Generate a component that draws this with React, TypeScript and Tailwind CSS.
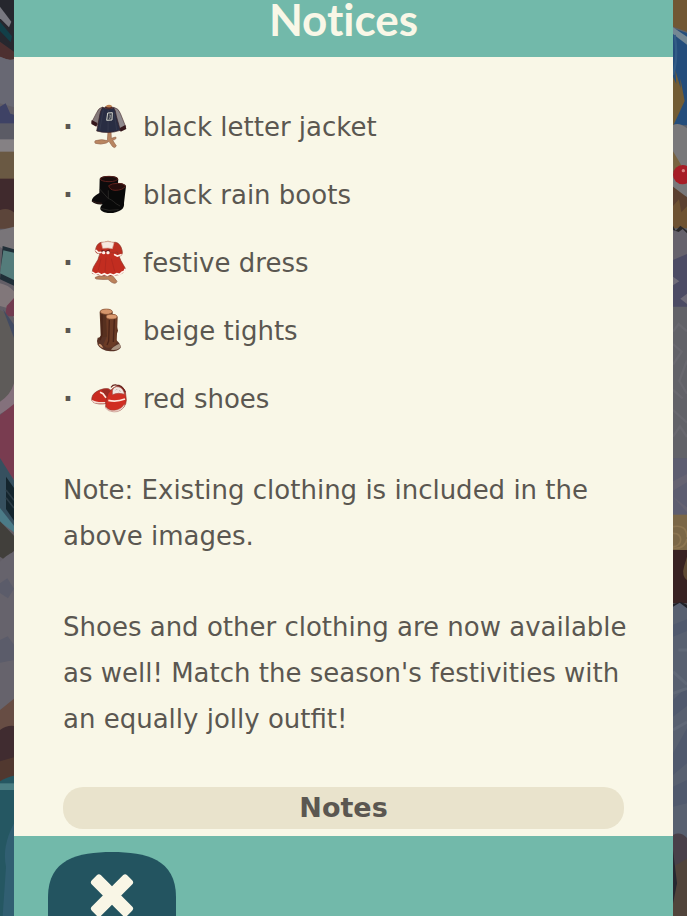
import { ReactNode } from 'react'

function JacketIcon() {
  return (
    <svg viewBox="120 24 111 144" className="h-12 w-[37px] shrink-0" aria-hidden="true">
      <path d="M136 137q20-6 36 0l2-26h9l1 19 13-4q5 6-9 10l11 17q-5 9-12 1l-10-15-8 5q-17 6-33 1-4-4 0-8Z" fill="#b98560" stroke="#94634a" strokeWidth="2" />
      <ellipse cx="177" cy="35" rx="9" ry="6" fill="#bd7c4c" />
      <path d="M158 36q-13 3-18 17l-15 29 15 10 20-22Z" fill="#84797a" stroke="#51383a" strokeWidth="2" />
      <path d="M191 37q15 3 20 18l16 40-17 12-24-43Z" fill="#8f898d" stroke="#51383a" strokeWidth="2" />
      <path d="m125 75 17 9-3 11-15-8ZM208 100l18-10 3 12-17 8Z" fill="#35171b" />
      <path d="M158 37q18 8 33 1 6 8 8 25l12 43q-36 12-71 2l7-36q3-25 11-35Z" fill="#292d43" stroke="#3a2025" strokeWidth="2" />
      <path d="m160 44-11 62M175 45l-1 66M192 50l8 55" fill="none" stroke="#3a3e52" strokeWidth="2" />
      <path d="M165 36q11 8 23 1" fill="none" stroke="#4c292b" strokeWidth="5" />
      <path d="m173 54 14-1-1 22-16 1Z" fill="#343846" stroke="#d5d6cd" strokeWidth="3" />
      <path d="m178 60 3 0-1 10h-3" fill="none" stroke="#c6c6c0" strokeWidth="2" />
    </svg>
  )
}

function BootsIcon() {
  return (
    <svg viewBox="120 18 111 144" className="h-12 w-[37px] shrink-0" aria-hidden="true">
      <path d="M149 41q4-8 26-8 28 0 30 10l-6 59q-9 12-29 15-35 5-45-8-1-12 23-25Z" fill="#0c0b0c" />
      <ellipse cx="177" cy="42" rx="26" ry="8" fill="#1b0c0c" stroke="#5a201c" strokeWidth="3" />
      <path d="M174 62q4-8 28-8 26 1 26 10l-6 50q2 14-9 21-17 11-40 9-24-4-22-15 0-10 24-25Z" fill="#090909" />
      <path d="M176 62q9-7 26-7 21 0 24 9-8 12-31 12-16-1-19-14Z" fill="#260d0c" stroke="#5f211c" strokeWidth="3" />
      <path d="m149 72 26 29v-25M175 101q8 1 23 15l12 7M151 130q25 10 55 4" fill="none" stroke="#353331" strokeWidth="2" />
      <path d="M127 108q12 8 29 7" fill="none" stroke="#49241e" strokeWidth="2" />
    </svg>
  )
}

function DressIcon() {
  return (
    <svg viewBox="120 21 111 144" className="h-12 w-[37px] shrink-0" aria-hidden="true">
      <path d="M136 136q13-7 32-2l18-5 15 19q-3 10-16 3l-11-9q-19 1-35-1-5-1-3-5Z" fill="#bb815a" stroke="#8d5c48" strokeWidth="2" />
      <ellipse cx="174" cy="31" rx="10" ry="5" fill="#bd8056" />
      <path d="M153 31q-14 4-17 25 1 8 11 9l50 2 8 7 9-4q5-5 2-16-5-20-19-23Z" fill="#bd3022" stroke="#8e382c" strokeWidth="2" />
      <path d="M151 60q-4 23-20 44-5 9-4 20 38 12 79 4 17-4 20-19-15-22-24-49Z" fill="#c22d20" stroke="#8e382c" strokeWidth="2" />
      <path d="M150 50q2-13 8-18h32q7 6 8 28h-46Z" fill="#bf2f21" />
      <path d="M154 32q20-7 38 0l-5 18-13-2-16 1Z" fill="#f7e9df" stroke="#d6a799" strokeWidth="2" />
      <path d="m138 55 7 7 8-1M194 68l8 4 11-4" fill="none" stroke="#fff0e8" strokeWidth="5" strokeLinecap="round" />
      <path d="m128 121 9 6 8-3 9 5 9-4 9 5 9-4 10 4 9-5 9 2 8-7 6-2 2-6" fill="none" stroke="#fff4ec" strokeWidth="5" strokeLinejoin="round" strokeLinecap="round" />
      <path d="m154 53 12 4 13-5v10l-12-3-11 3Z" fill="#691b1b" />
      <circle cx="161" cy="62" r="5" fill="#fff0e8" />
      <circle cx="174" cy="62" r="5" fill="#fff0e8" />
      <path d="m153 80-8 34M168 77l-3 44M184 80l10 38" stroke="#aa261e" strokeWidth="2" />
    </svg>
  )
}

function TightsIcon() {
  return (
    <svg viewBox="120 21 111 144" className="h-12 w-[37px] shrink-0" aria-hidden="true">
      <path d="M149 36q3-9 20-9 16 0 19 10l-2 70q-5 29-25 29-18-1-18-16l9-13Z" fill="#57301f" />
      <path d="M143 113q-4 10 0 21 10 18 38 20 24 0 31-11 1-9-10-20l-18-15Z" fill="#593326" />
      <path d="M168 50q4-9 18-8 15 1 17 10l-3 76-11 13q-22 7-29-7l11-25Z" fill="#6b3b25" />
      <path d="M156 43v60l-6 18M178 60l-2 63-5 12M193 57l-3 69" fill="none" stroke="#4a2418" strokeWidth="4" />
      <path d="m200 77 4 15-5 13Z" fill="#5b301e" />
      <ellipse cx="169" cy="35" rx="18" ry="8" fill="#d6966c" stroke="#8f5838" strokeWidth="2" />
      <ellipse cx="185" cy="50" rx="16" ry="7" fill="#dc9b70" stroke="#8f5838" strokeWidth="2" />
      <path d="M147 131q7 0 13 13-9-2-14-10Z" fill="#cf9870" />
      <path d="M183 149q5-9 25-18 6 7 1 13-9 8-26 5Z" fill="#aa9380" />
    </svg>
  )
}

function ShoesIcon() {
  return (
    <svg viewBox="120 14 111 144" className="h-12 w-[37px] shrink-0" aria-hidden="true">
      <path d="M126 81q2-13 23-22 13-6 26-4l15 9 1 21-18 14q-29 5-43-3-7-5-4-15Z" fill="#c92b20" stroke="#82312a" strokeWidth="2" />
      <path d="M126 88q12 9 40 7v4q-30 3-39-5Z" fill="#f4dcd2" />
      <path d="m155 58 17-2 14 9-13 16-12-8Z" fill="#9c2b23" />
      <path d="M174 70q16-22 30-22 17 1 22 15l3 26q0 12-8 22-12 14-34 11-15-3-20-14-1-18 7-38Z" fill="#d02e22" stroke="#82312a" strokeWidth="2" />
      <path d="M187 66q-1-14 12-17 17-1 23 16l1 7q-17-7-36 1Z" fill="#eee5df" stroke="#a44c43" strokeWidth="2" />
      <path d="M184 50q5-8 15-6 17 0 26 20" fill="none" stroke="#6b2721" strokeWidth="4" strokeLinecap="round" />
      <path d="m150 66 9 4 9 12M175 90q24 6 50-4" fill="none" stroke="#ffe6dc" strokeWidth="5" />
      <path d="M167 109q8 12 26 11 19-1 30-18l1 5q-11 18-32 18-18-1-26-12Z" fill="#f2d9cf" stroke="#9b5149" strokeWidth="1" />
      <path d="M197 60q2-4 5-2M207 61q4-1 5 3" fill="none" stroke="#b8a19a" strokeWidth="2" />
    </svg>
  )
}

function VillageLeft() {
  return (
    <svg viewBox="0 0 42 2748" preserveAspectRatio="none" className="h-full w-full" aria-hidden="true">
      <path d="M0 0h42v2748H0Z" fill="#625e66" />
      <path d="M0 0h42v180L0 145Z" fill="#26272e" />
      <path d="m0 20 34 45-7 17L0 55Z" fill="#787880" />
      <path d="m0 65 36 44-4 18L0 93Z" fill="#123f48" />
      <path d="M0 125 42 155v30L0 170Z" fill="#4d3030" />
      <path d="M0 170q26 13 42 7v145L0 310Z" fill="#686873" />
      <path d="m0 320 17-10 14 31 11 3v34L0 372Z" fill="#3e4265" />
      <path d="M0 370h42v50H0Z" fill="#5b5b65" />
      <path d="M0 418h42v42H0Z" fill="#858184" />
      <path d="M0 455h42v85H0Z" fill="#6a5943" />
      <path d="M0 536h42v102H0Z" fill="#402a2d" />
      <path d="M0 630q26-8 42 8v48H0Z" fill="#5c453a" />
      <path d="M0 691 42 680v90L0 741Z" fill="#797579" />
      <path d="m8 738 34 10v109L0 838Z" fill="#202f38" />
      <path d="m10 751 32 7v82L0 820Z" fill="#547c7b" />
      <path d="M0 850q25 5 42 24v80L25 925 0 918Z" fill="#81777a" />
      <path d="m20 918 22-24v55H15Z" fill="#713c50" />
      <path d="M0 930q30 10 42 55v205q-20 30-42 36Z" fill="#5e5b59" />
      <path d="m9 928 33 46v40Z" fill="#424b62" />
      <path d="M42 1150q-10 35-42 55v37l42-24Z" fill="#84717c" />
      <path d="m42 1212-42 33v141l42 53Z" fill="#793c50" />
      <path d="m0 1374 42 67v138L0 1552Z" fill="#36505f" />
      <path d="m18 1430 24 34v98l-24-35Z" fill="#14252d" />
      <path d="m18 1470 24 31M18 1493l24 31" stroke="#2c3c46" strokeWidth="5" />
      <path d="m0 1524 42 53v20L0 1566Z" fill="#4b7b87" />
      <path d="m0 1564 42 43v45L15 1680 0 1670Z" fill="#413f3b" />
      <path d="M0 1685q20-21 42-30v460L0 2145Z" fill="#66636c" />
      <path d="m0 1750 22-15 20 31-18 29-24-16ZM0 1920l23-11 19 25v46L0 1988Z" fill="#5b5c6a" />
      <path d="m0 2130 42-34v88L0 2198Z" fill="#674d44" />
      <path d="M0 2190q22-15 42-12v120L0 2310Z" fill="#402c30" />
      <path d="m0 2284 42-12v55L0 2353Z" fill="#51382f" />
      <path d="M0 2344q22-14 42-17v421H0Z" fill="#255762" />
      <path d="M0 2350h42v20H0Z" fill="#4a7e83" />
      <path d="M42 2470Q5 2540 18 2600L8 2748h34Z" fill="#315f72" />
    </svg>
  )
}

function VillageRight() {
  return (
    <svg viewBox="0 0 42 2748" preserveAspectRatio="none" className="h-full w-full" aria-hidden="true">
      <path d="M0 0h42v2748H0Z" fill="#5e6068" />
      <path d="M0 0h42v95L0 80Z" fill="#715734" />
      <path d="m0 85 42 14v277H0Z" fill="#244d7b" />
      <path d="m0 82 42 28v24L0 102Z" fill="#758894" />
      <path d="M5 105q11 68-5 120" fill="none" stroke="#335c86" strokeWidth="7" />
      <path d="m0 230 10 22-3-41 16 54-1-30 13 68-35 76Z" fill="#725c34" />
      <path d="M0 375q18-10 42 10v205L24 584 0 560Z" fill="#79787a" />
      <path d="m0 454 25 42-24 22Z" fill="#79633f" />
      <path d="m0 560 42 32v80H0Z" fill="#5b4030" />
      <path d="m0 618 18-20 7 39 17-18v66H0Z" fill="#6e5232" />
      <path d="m0 677 8 15 14-15 20 15v30H0Z" fill="#2a282a" />
      <path d="m0 690 17 6 12-9 13 13v88H0Z" fill="#66626c" />
      <path d="m0 780 42-18v160H0Z" fill="#4c4b64" />
      <path d="m0 830 19 14-19 12ZM22 896l20-15v31Z" fill="#706c79" />
      <path d="M0 920h42v455H0Z" fill="#626268" />
      <path d="m0 995 17-23 25 22M0 1032l26 23-26 39M42 1081l-23 62 23 38M0 1170l29 25M0 1230l42 38M0 1310l21-31 21 32" fill="none" stroke="#69686f" strokeWidth="7" />
      <path d="M0 1375h42v175H0Z" fill="#5d5d70" />
      <path d="m0 1444 42-22v25L0 1472ZM0 1490l42 32v15Z" fill="#666372" />
      <path d="M0 1544h42v116H0Z" fill="#7b6747" />
      <path d="M0 1580q42-8 42 32M0 1600q22-1 23 20-2 19-23 20M42 1617q-7 32-42 27" fill="none" stroke="#8c7551" strokeWidth="5" />
      <path d="M0 1650h42v160H0Z" fill="#382222" />
      <path d="M33 1700q-8 26 9 41v-71Z" fill="#604b34" />
      <path d="m0 1812 24-6 18 8v44H0Z" fill="#202127" />
      <path d="m0 1820 20-12 22 17v740H0Z" fill="#586070" />
      <path d="m0 1874 42-16v35L0 1910ZM0 2100l42-40v58L0 2150ZM42 2185 0 2260v65l42-35ZM0 2360l42-20v70L0 2420Z" fill="#50596d" />
      <path d="M16 1950h26M0 2015l42 38M0 2080l42-15M0 2190l42-24" stroke="#606877" strokeWidth="9" />
      <path d="M0 2505q22-12 42 9v234H0Z" fill="#494049" />
      <path d="m0 2600 42-24v172H0Z" fill="#51443b" />
      <path d="M0 2550 12 2650l-12 61Z" fill="#272830" />
      <circle cx="29" cy="524" r="29" fill="#a71d26" />
      <circle cx="31" cy="512" r="5" fill="#d98282" />
    </svg>
  )
}

interface Item {
  name: string
  icon: ReactNode
}

const items: Item[] = [
  { name: 'black letter jacket', icon: <JacketIcon /> },
  { name: 'black rain boots', icon: <BootsIcon /> },
  { name: 'festive dress', icon: <DressIcon /> },
  { name: 'beige tights', icon: <TightsIcon /> },
  { name: 'red shoes', icon: <ShoesIcon /> },
]

function CloseButton() {
  return (
    <button type="button" aria-label="Close" className="block h-[90px] w-32 shrink-0">
      <svg viewBox="0 0 128 90" className="h-full w-full" aria-hidden="true">
        <path d="M0 45C0 7 30 0 64 0s64 7 64 45v20c0 20-24 25-64 25S0 85 0 65Z" fill="#235460" />
        <g fill="#f9f6e6">
          <rect x="39" y="37" width="50" height="13" rx="3" transform="rotate(45 64 43.5)" />
          <rect x="39" y="37" width="50" height="13" rx="3" transform="rotate(-45 64 43.5)" />
        </g>
      </svg>
    </button>
  )
}

export default function App() {
  return (
    <div className="flex h-screen overflow-hidden bg-[#5e6068] font-['DejaVu_Sans',sans-serif] text-[26px] leading-[46px] text-[#5b5751]">
      <div className="w-[14px] shrink-0">
        <VillageLeft />
      </div>
      <div className="flex min-w-0 flex-1 flex-col bg-[#f9f7e7]">
        <header className="shrink-0 bg-[#72b9aa] pb-[19px] text-center">
          <h1 className="font-['Lato',sans-serif] text-[44px] leading-[38px] font-bold text-[#f9f7e7] [font-variant-ligatures:none]">
            Notices
          </h1>
        </header>
        <main className="shrink-0 px-[49px] pt-9 pb-[7px]">
          <ul>
            {items.map((item) => (
              <li key={item.name} className="flex h-[68px] items-center">
                <span className="w-[27px] font-bold">·</span>
                {item.icon}
                <span className="ml-4">{item.name}</span>
              </li>
            ))}
          </ul>
          <p className="-mr-4 mt-[34px]">Note: Existing clothing is included in the above images.</p>
          <p className="-mr-4 mt-[45px]">
            Shoes and other clothing are now available as well! Match the season's festivities with an equally jolly
            outfit!
          </p>
          <h2 className="mt-[45px] rounded-[20px] bg-[#e9e3cc] text-center text-[27px] leading-[42px] font-bold">
            Notes
          </h2>
        </main>
        <footer className="min-h-0 flex-1 overflow-hidden bg-[#72b9aa] px-[34px] pt-4">
          <CloseButton />
        </footer>
      </div>
      <div className="w-[14px] shrink-0">
        <VillageRight />
      </div>
    </div>
  )
}
